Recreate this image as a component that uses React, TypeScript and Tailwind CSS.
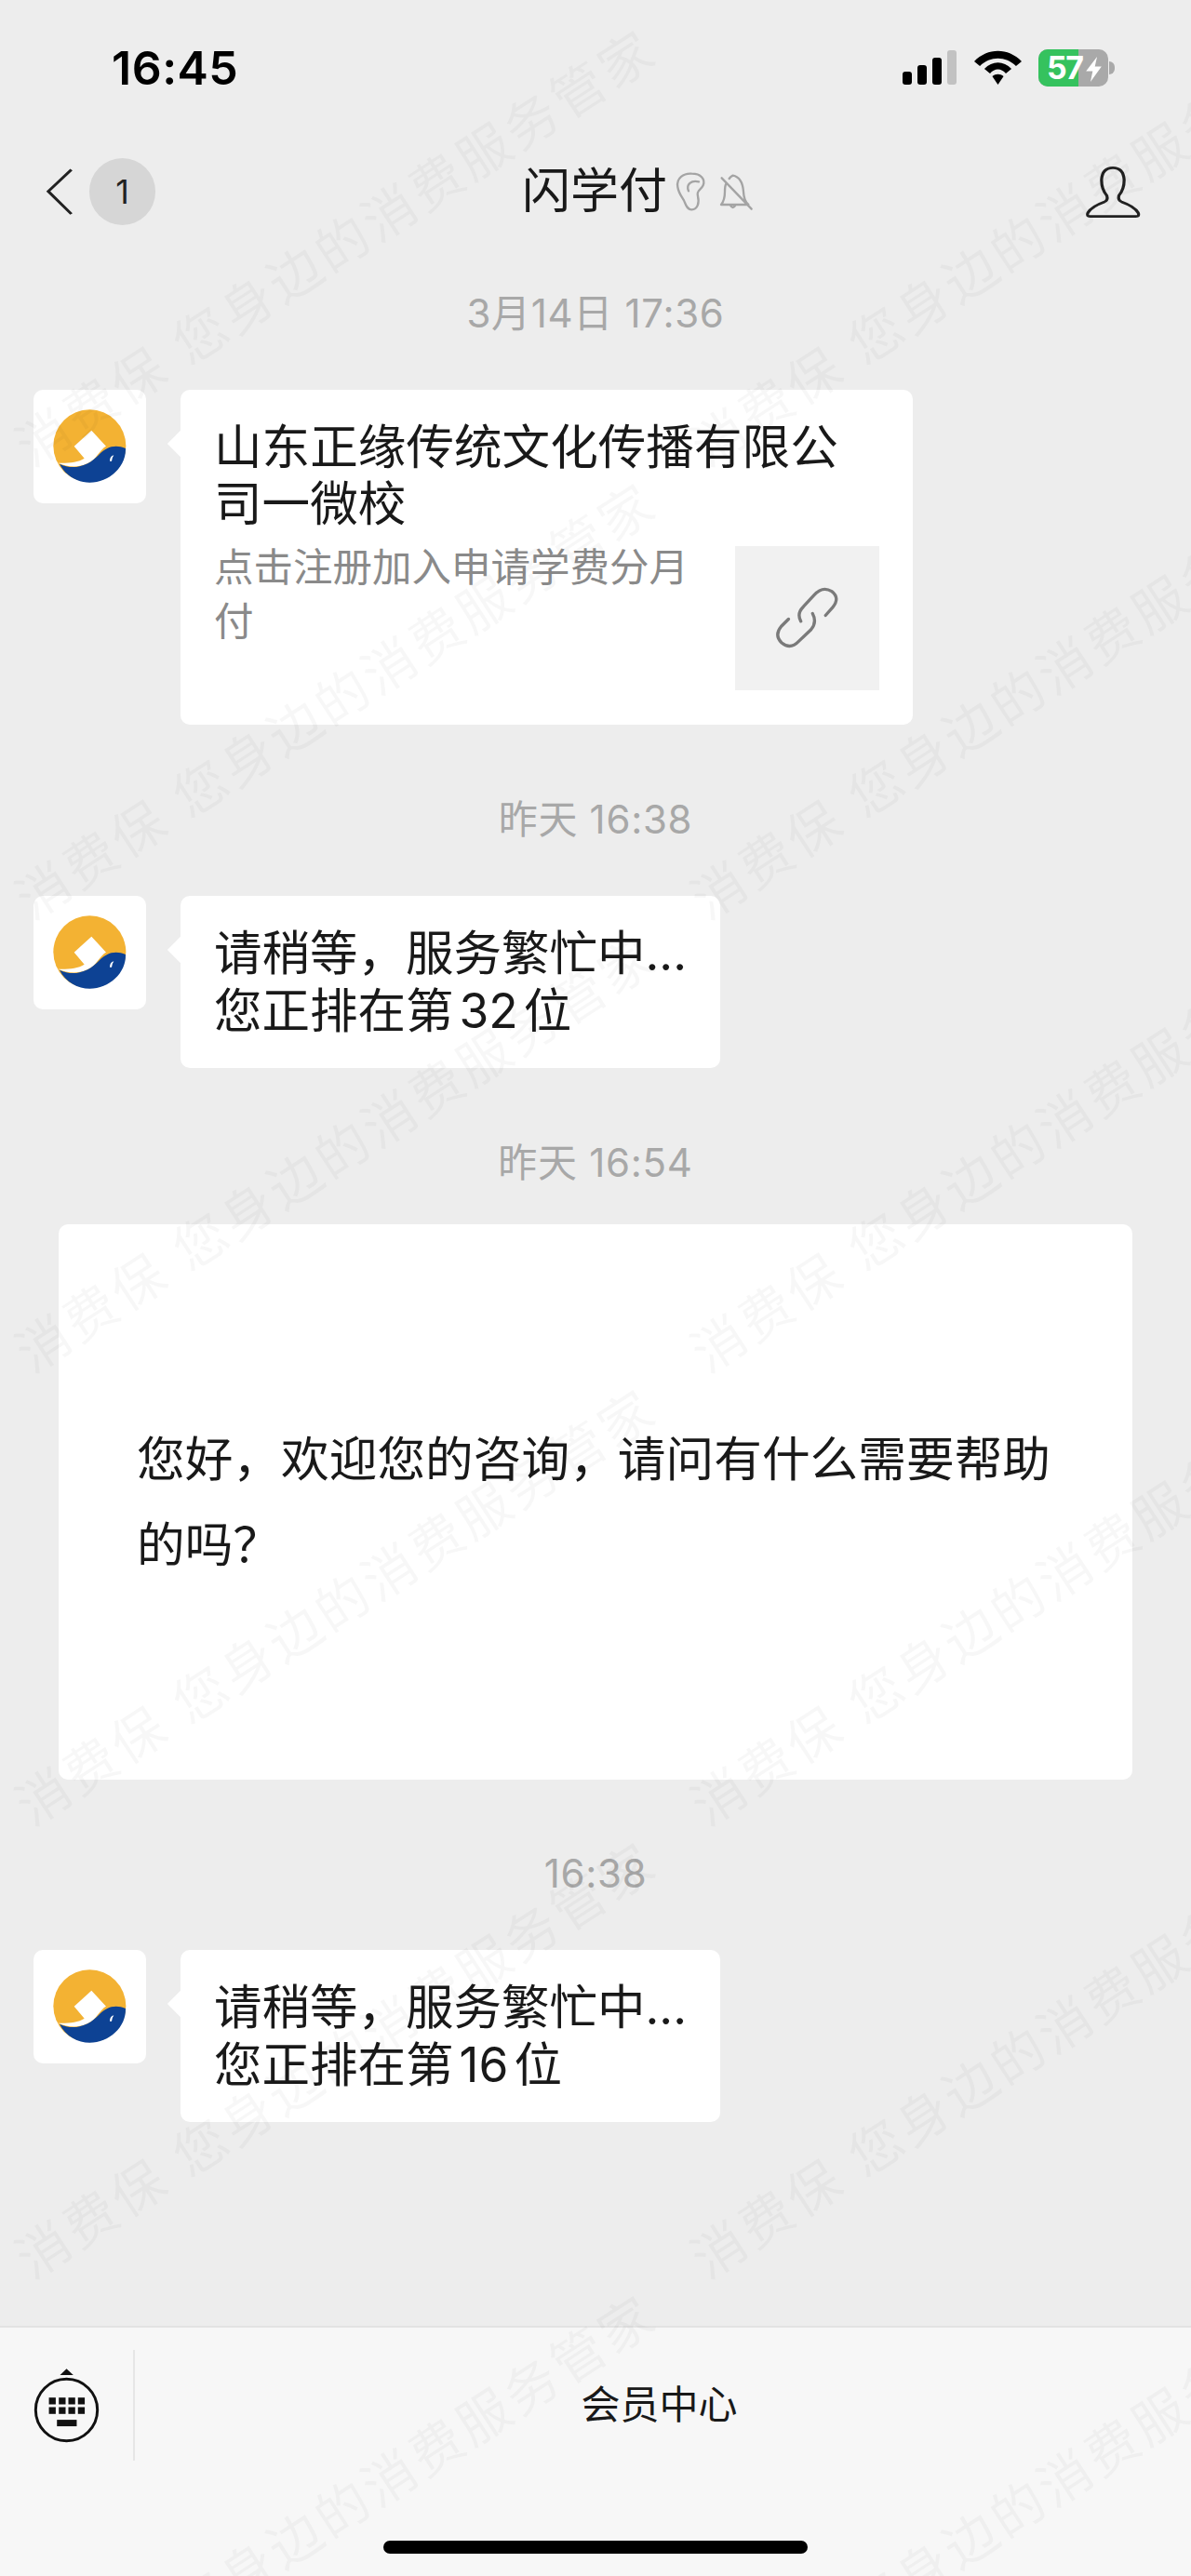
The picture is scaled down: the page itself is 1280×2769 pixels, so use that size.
const font = "font-['Inter','Noto_Sans_CJK_SC',sans-serif]";

function Logo() {
  return (
    <svg viewBox="0 0 288 288" className="w-[96px] h-[96px]">
      <circle cx="142" cy="142" r="117" fill="#f3b233" />
      <path d="M148 92 L195 143 C178 152 165 178 150 190 C115 215 75 212 40 197 C70 198 105 196 125 182 L92 143Z" fill="#ffffff" />
      <path d="M258 150 C225 135 195 145 172 170 C145 200 95 225 45 200 C65 240 105 260 142 260 C205 260 260 210 258 150Z" fill="#0d4294" />
      <path d="M207 191 Q207 175 220 172 Q214 180 213 191Z" fill="#ffffff" />
    </svg>
  );
}

function Avatar() {
  return (
    <div className="w-[121px] h-[122px] shrink-0 rounded-[10px] bg-white flex items-center justify-center">
      <Logo />
    </div>
  );
}

function Tail() {
  return <div className="absolute left-[-10px] top-[48px] w-[20px] h-[20px] rotate-45 bg-white" />;
}

function TimeLabel({ children, className }: { children: string; className: string }) {
  return (
    <div className={`h-[60px] flex items-center justify-center text-[42px] leading-none tracking-[0.7px] text-[#a8a8a8] ${className}`}>
      {children}
    </div>
  );
}

function QueueBubble({ pos }: { pos: string }) {
  return (
    <div className="flex pl-[36px]">
      <Avatar />
      <div className="relative ml-[37px] w-[580px] h-[185px] rounded-[10px] bg-white pl-[36px] pt-[30px] text-[51.5px] leading-[62px] text-[#191919]">
        <Tail />
        <div>请稍等，服务繁忙中...</div>
        <div>
          您正排在第<span className="mx-[6px]">{pos}</span>位
        </div>
      </div>
    </div>
  );
}

function Watermark() {
  const rows = [463, 950, 1437, 1924, 2411, 2898];
  const cols = [8, 734];
  return (
    <div className="absolute inset-0 overflow-hidden pointer-events-none z-10">
      {rows.flatMap((y) =>
        cols.map((x) => (
          <div
            key={`${x}-${y}`}
            className="absolute origin-top-left whitespace-nowrap text-[56.5px] leading-none tracking-[4px] text-black/[0.03] -rotate-[33deg]"
            style={{ left: x, top: y }}
          >
            消费保 您身边的消费服务管家
          </div>
        ))
      )}
    </div>
  );
}

export default function App() {
  return (
    <div className={`relative w-[1280px] h-[2769px] overflow-hidden bg-[#ededed] flex flex-col ${font}`}>
      <Watermark />
      {/* status bar */}
      <div className="h-[146px] flex items-center justify-between pl-[120px] pr-[82px] shrink-0">
        <div className="text-[50px] leading-none font-semibold text-black tracking-[0.5px]">16:45</div>
        <div className="flex items-center">
          <svg viewBox="0 0 58 38" className="w-[58px] h-[38px]">
            <rect x="0" y="23" width="10" height="14" rx="3" fill="#000" />
            <rect x="16" y="16" width="10" height="21" rx="3" fill="#000" />
            <rect x="32" y="8" width="10" height="29" rx="3" fill="#000" />
            <rect x="48" y="0" width="10" height="37" rx="3" fill="#c2c2c2" />
          </svg>
          <svg viewBox="0 0 42 38" preserveAspectRatio="none" className="w-[51px] h-[38px] ml-[19px]">
            <path d="M0 12 C12 -3 30 -3 42 12 L37 17 C28 6 14 6 5 17Z" fill="#000" />
            <path d="M9 20 C16 11 26 11 33 20 L28 25 C24 19 18 19 14 25Z" fill="#000" />
            <path d="M16 28 C19 25 23 25 26 28 L21 37Z" fill="#000" />
          </svg>
          <div className="relative ml-[18px] w-[75px] h-[40px] rounded-[10px] overflow-hidden bg-[#a9a9a9] flex">
            <div className="w-[43px] h-full bg-[#35c25e]" />
            <div className="absolute left-[9px] top-0 h-full flex items-center text-[34px] leading-none font-bold tracking-[-1.5px] text-white">57</div>
            <svg viewBox="0 0 16 28" preserveAspectRatio="none" className="absolute left-[50px] top-[8px] w-[19px] h-[27px]">
              <path d="M11 0 L1 16 H7 L5 28 L15 11 H9Z" fill="#fff" />
            </svg>
          </div>
          <div className="ml-[1px] w-[6px] h-[14px] rounded-r-full bg-[#a9a9a9]" />
        </div>
      </div>

      {/* nav */}
      <div className="h-[120px] shrink-0 flex items-center pl-[49px] pr-[54px]">
        <svg viewBox="120 540 75 156" preserveAspectRatio="none" className="w-[31px] h-[52px]">
          <path d="M187 547 L127 617 L187 690" fill="none" stroke="#222" strokeWidth="8" />
        </svg>
        <div className="ml-[16px] w-[71px] h-[72px] rounded-full bg-[#d6d6d6] flex items-center justify-center text-[36px] leading-none text-[#222]">1</div>
        <div className="ml-[394px] text-[52px] leading-none text-[#191919]">闪学付</div>
        <svg viewBox="0 0 315 180" className="ml-[-2px] w-[105px] h-[60px]">
          <g fill="none" stroke="#a4a4a4" strokeWidth="7" strokeLinecap="round" strokeLinejoin="round">
            <path d="M40 75 C35 45 60 30 85 32 C115 32 130 50 122 70 C115 85 100 85 105 105 C110 125 105 148 85 148 C70 148 65 130 60 118 C52 105 43 95 40 75Z" />
            <path d="M75 88 C66 66 84 52 108 58" />
            <path d="M218 38 C240 42 250 65 252 90 C253 110 260 125 268 132 L180 132 C190 120 192 105 192 90 C192 80 192 72 196 65 M206 48 C210 42 214 40 218 38 M210 134 Q218 148 226 134 M182 46 L278 146" />
          </g>
        </svg>
        <svg viewBox="1288 534 148 170" preserveAspectRatio="none" className="ml-auto w-[60px] h-[57px]">
          <path d="M1302 697 H1423 Q1434 697 1429 685 Q1420 665 1385 650 Q1375 645 1378 630 Q1392 610 1392 580 Q1390 541 1362 541 Q1334 541 1332 580 Q1332 610 1346 630 Q1350 645 1340 650 Q1305 665 1296 685 Q1291 697 1302 697Z" fill="none" stroke="#222" strokeWidth="8" />
        </svg>
      </div>

      <TimeLabel className="mt-[41px] mb-[52px]">3月14日 17:36</TimeLabel>

      {/* link card */}
      <div className="flex pl-[36px]">
        <Avatar />
        <div className="relative ml-[37px] w-[787px] h-[360px] rounded-[10px] bg-white pl-[36px] pt-[31px]">
          <Tail />
          <div className="w-[690px] text-[51.6px] leading-[61px] text-[#191919]">山东正缘传统文化传播有限公司一微校</div>
          <div className="flex mt-[5px]">
            <div className="w-[522px] pt-[4px] text-[42.5px] leading-[58px] text-[#8a8a8a]">点击注册加入申请学费分月付</div>
            <div className="ml-[38px] mt-[10px] w-[155px] h-[155px] bg-[#f1f1f1] flex items-center justify-center">
              <svg viewBox="390 265 225 220" className="w-[75px] h-[73px]">
                <path d="M482 385 Q468 360 490 338 L525 300 Q552 270 582 288 Q610 310 585 340 L562 366 M442 378 L418 402 Q395 430 420 455 Q448 478 475 450 L515 412 Q535 388 520 360" fill="none" stroke="#7a7a7a" strokeWidth="10" strokeLinecap="round" />
              </svg>
            </div>
          </div>
        </div>
      </div>

      <TimeLabel className="mt-[72px] mb-[52px]">昨天 16:38</TimeLabel>
      <QueueBubble pos="32" />

      <TimeLabel className="mt-[72px] mb-[36px]">昨天 16:54</TimeLabel>
      <div className="mx-[63px] h-[597px] rounded-[10px] bg-white pl-[84px] pr-[60px] pb-[2px] flex items-center text-[51.7px] leading-[92px] text-[#191919]">
        <div>您好，欢迎您的咨询，请问有什么需要帮助的吗？</div>
      </div>

      <TimeLabel className="mt-[71px] mb-[52px]">16:38</TimeLabel>
      <QueueBubble pos="16" />

      {/* bottom bar */}
      <div className="mt-auto h-[269px] border-t-2 border-[#e3e3e3] bg-[#f7f7f7] shrink-0">
        <div className="h-[166px] flex items-center">
          <div className="w-[143px] shrink-0 pl-[35px]">
            <svg viewBox="105 180 220 250" className="w-[73px] h-[83px]">
              <path d="M194 207 L215 187 L237 207Z" fill="#111" />
              <circle cx="215" cy="320" r="100" fill="none" stroke="#111" strokeWidth="9" />
              {[158, 190, 221, 252].flatMap((x) =>
                [280, 311].map((y) => <rect key={`${x}-${y}`} x={x} y={y} width="22" height="22" fill="#111" />)
              )}
              <rect x="184" y="352" width="64" height="21" fill="#111" />
            </svg>
          </div>
          <div className="w-[2px] h-[119px] bg-[#e6e6e6]" />
          <div className="flex-1 pr-[8px] text-center text-[42px] leading-none text-[#191919]">会员中心</div>
        </div>
        <div className="mx-auto mt-[63px] w-[456px] h-[14px] rounded-full bg-black" />
      </div>
    </div>
  );
}
